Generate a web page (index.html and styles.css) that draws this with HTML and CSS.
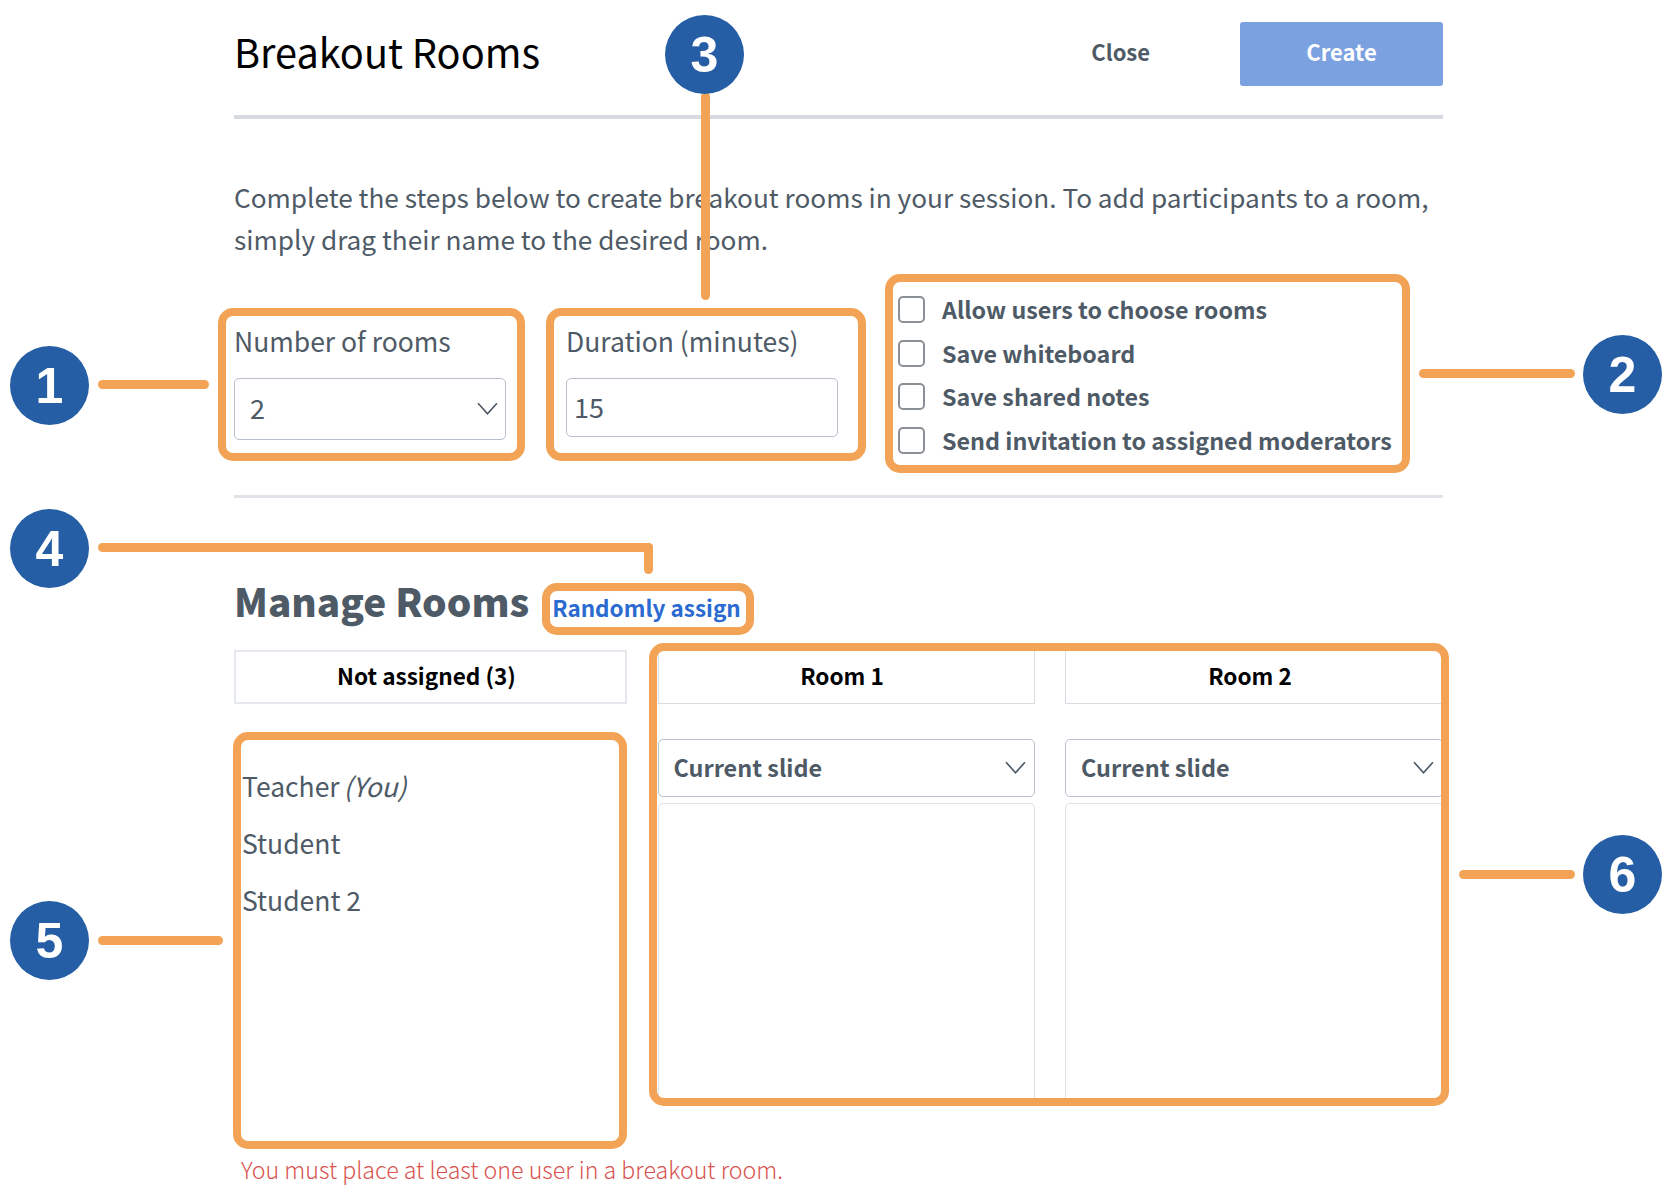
FILE: index.html
```html
<!DOCTYPE html>
<html lang="en">
<head>
    <meta charset="UTF-8">
    <title>Breakout Rooms</title>
    <link rel="stylesheet" href="styles.css">
</head>
<body>
    <main class="modal">
        <header class="modal-header">
            <h1>Breakout Rooms</h1>
            <div class="modal-actions">
                <span class="btn-close">Close</span>
                <span class="btn-create">Create</span>
            </div>
        </header>

        <p class="intro">Complete the steps below to create breakout rooms in your session. To add participants to a room, simply drag their name to the desired room.</p>

        <div class="settings">
            <div class="field field-rooms">
                <div class="field-label">Number of rooms</div>
                <div class="select select-rooms">
                    <span>2</span>
                    <svg class="chevron" viewBox="0 0 20 12"><path d="M1 1l9 10 9-10"/></svg>
                </div>
            </div>
            <div class="field field-duration">
                <div class="field-label">Duration (minutes)</div>
                <div class="input">15</div>
            </div>
            <ul class="options">
                <li><span class="checkbox"></span><span class="option-text">Allow users to choose rooms</span></li>
                <li><span class="checkbox"></span><span class="option-text">Save whiteboard</span></li>
                <li><span class="checkbox"></span><span class="option-text">Save shared notes</span></li>
                <li><span class="checkbox"></span><span class="option-text">Send invitation to assigned moderators</span></li>
            </ul>
        </div>

        <div class="manage-title">
            <h2>Manage Rooms</h2>
            <span class="random-link">Randomly assign</span>
        </div>

        <div class="rooms">
            <section class="room">
                <div class="room-head room-head-first">Not assigned (3)</div>
                <ul class="users">
                    <li>Teacher <em>(You)</em></li>
                    <li>Student</li>
                    <li>Student 2</li>
                </ul>
            </section>
            <section class="room">
                <div class="room-head">Room 1</div>
                <div class="select select-slide">
                    <span>Current slide</span>
                    <svg class="chevron" viewBox="0 0 20 12"><path d="M1 1l9 10 9-10"/></svg>
                </div>
                <div class="dropzone"></div>
            </section>
            <section class="room">
                <div class="room-head">Room 2</div>
                <div class="select select-slide">
                    <span>Current slide</span>
                    <svg class="chevron" viewBox="0 0 20 12"><path d="M1 1l9 10 9-10"/></svg>
                </div>
                <div class="dropzone"></div>
            </section>
        </div>

        <p class="error">You must place at least one user in a breakout room.</p>
    </main>

    <!-- numbered callouts drawn over the dialog -->
    <div class="frame frame-1"></div>
    <div class="frame frame-2"></div>
    <div class="frame frame-3"></div>
    <div class="frame frame-4"></div>
    <div class="frame frame-5"></div>
    <div class="frame frame-6"></div>

    <div class="leader leader-1"></div>
    <div class="leader leader-2"></div>
    <div class="leader leader-3"></div>
    <div class="leader leader-4a"></div>
    <div class="leader leader-4b"></div>
    <div class="leader leader-5"></div>
    <div class="leader leader-6"></div>

    <div class="badge badge-1">1</div>
    <div class="badge badge-2">2</div>
    <div class="badge badge-3">3</div>
    <div class="badge badge-4">4</div>
    <div class="badge badge-5">5</div>
    <div class="badge badge-6">6</div>
</body>
</html>
```

FILE: styles.css
```css
body {
    margin: 0;
    background-color: #ffffff;
    font-family: "Noto Sans CJK JP", "Open Sans", sans-serif;
    color: #4e5a66;
}
ul {
    list-style: none;
    margin: 0;
    padding: 0;
}
.modal {
    width: 1209px;
    margin-left: 234px;
}
.modal-header {
    display: flex;
    justify-content: space-between;
    align-items: center;
    padding: 22px 0 29px;
    border-bottom: 4px solid #d5dbe0;
}
.modal-header h1 {
    margin: 0 0 6px;
    font-size: 39.7px;
    line-height: 58px;
    font-weight: 400;
    color: #000000;
}
.modal-actions {
    display: flex;
    align-items: center;
}
.btn-close {
    margin: 0 90px 6px 0;
    font-size: 22px;
    font-weight: 700;
}
.btn-create {
    width: 203px;
    height: 64px;
    line-height: 58px;
    text-align: center;
    font-size: 22px;
    font-weight: 700;
    color: #ffffff;
    background-color: #7ba1e0;
    border-radius: 3px;
}
.intro {
    margin: 57px 0 0;
    font-size: 26.2px;
    line-height: 42px;
}
.settings {
    display: flex;
    align-items: flex-start;
    margin-top: 36px;
    padding-bottom: 41.5px;
    border-bottom: 3px solid #dfe3e8;
}
.field {
    margin-top: 27px;
}
.field-rooms {
    width: 272px;
    margin-right: 60px;
}
.field-duration {
    width: 272px;
    margin-right: 60px;
}
.field-label {
    font-size: 26.5px;
    line-height: 36px;
    margin-bottom: 19px;
}
.select {
    display: flex;
    justify-content: space-between;
    align-items: center;
    box-sizing: border-box;
    background-color: #ffffff;
    border: 1.5px solid #b8c0cc;
    border-radius: 5px;
}
.select-rooms {
    height: 62px;
    padding: 0 7px 4px 15px;
    font-size: 27px;
}
.input {
    box-sizing: border-box;
    height: 59px;
    line-height: 55px;
    padding-left: 7px;
    border: 1.5px solid #b8c0cc;
    border-radius: 5px;
    font-size: 27px;
}
.chevron {
    width: 21px;
    height: 13px;
    fill: none;
    stroke: #4e5a66;
    stroke-width: 1.6;
}
.select-rooms .chevron {
    margin-top: 2px;
}
.select-slide .chevron {
    margin-top: 1px;
}
.options li {
    display: flex;
    align-items: center;
    height: 27px;
    margin-bottom: 16.5px;
    font-size: 23.3px;
    font-weight: 700;
    white-space: nowrap;
}
.options li:last-child {
    margin-bottom: 0;
}
.option-text {
    margin-top: -1px;
}
.checkbox {
    box-sizing: border-box;
    width: 27px;
    height: 27px;
    margin-right: 17px;
    border: 2px solid #8b9096;
    border-radius: 5px;
}
.manage-title {
    display: flex;
    align-items: baseline;
    margin-top: 72px;
    height: 80px;
}
.manage-title h2 {
    margin: 0;
    font-size: 38.7px;
    line-height: 60px;
    font-weight: 900;
}
.random-link {
    margin-left: 23px;
    font-size: 22.5px;
    font-weight: 700;
    color: #2b6bd1;
}
.rooms {
    display: grid;
    grid-template-columns: 393px 377px 378px;
    justify-content: space-between;
}
.room-head {
    box-sizing: border-box;
    height: 54px;
    padding-right: 8px;
    line-height: 50px;
    text-align: center;
    font-size: 22.6px;
    font-weight: 700;
    color: #000000;
    border: 1px solid #d9dde3;
}
.room-head-first {
    line-height: 48px;
    border: 2px solid #e4e8ec;
}
.users {
    height: 417px;
    margin-top: 28px;
    padding: 25px 0 0 8px;
    box-sizing: border-box;
    font-size: 26.5px;
}
.users li {
    height: 57px;
    line-height: 57px;
}
.users em {
    margin-left: -2px;
}
.select-slide {
    height: 58px;
    margin-top: 35px;
    padding: 0 8px 2px 15px;
    font-size: 23.4px;
    font-weight: 700;
}
.dropzone {
    box-sizing: border-box;
    height: 300px;
    margin-top: 6px;
    border: 1px solid #dde1e6;
    border-radius: 5px;
}
.error {
    margin: 2px 0 0 7px;
    font-size: 23.2px;
    line-height: 36px;
    font-weight: 300;
    color: #d9534f;
}

/* callouts */
.frame {
    position: absolute;
    box-sizing: border-box;
    border: 8px solid #f3a356;
    border-radius: 15px;
}
.frame-1 { left: 218px; top: 308px; width: 307px; height: 153px; }
.frame-2 { left: 885px; top: 274px; width: 525px; height: 199px; }
.frame-3 { left: 546px; top: 308px; width: 320px; height: 153px; }
.frame-4 { left: 542px; top: 583px; width: 212px; height: 52px; }
.frame-5 { left: 233px; top: 732px; width: 394px; height: 417px; }
.frame-6 { left: 649px; top: 643px; width: 800px; height: 463px; }

.leader {
    position: absolute;
    background-color: #f3a356;
    border-radius: 5px;
}
.leader-1 { left: 98px; top: 380px; width: 111px; height: 9px; }
.leader-2 { left: 1419px; top: 369px; width: 156px; height: 9px; }
.leader-3 { left: 701px; top: 92px; width: 9px; height: 208px; }
.leader-4a { left: 98px; top: 543px; width: 555px; height: 9px; }
.leader-4b { left: 644px; top: 543px; width: 9px; height: 31px; }
.leader-5 { left: 98px; top: 936px; width: 125px; height: 9px; }
.leader-6 { left: 1459px; top: 870px; width: 116px; height: 9px; }

.badge {
    position: absolute;
    width: 79px;
    height: 79px;
    line-height: 81px;
    text-align: center;
    border-radius: 50%;
    background-color: #265ea6;
    color: #ffffff;
    font-family: "Liberation Sans", Arial, sans-serif;
    font-size: 50px;
    font-weight: 700;
}
.badge-1 { left: 10px; top: 346px; }
.badge-2 { left: 1583px; top: 335px; }
.badge-3 { left: 665px; top: 15px; }
.badge-4 { left: 10px; top: 509px; }
.badge-5 { left: 10px; top: 901px; }
.badge-6 { left: 1583px; top: 835px; }
```
